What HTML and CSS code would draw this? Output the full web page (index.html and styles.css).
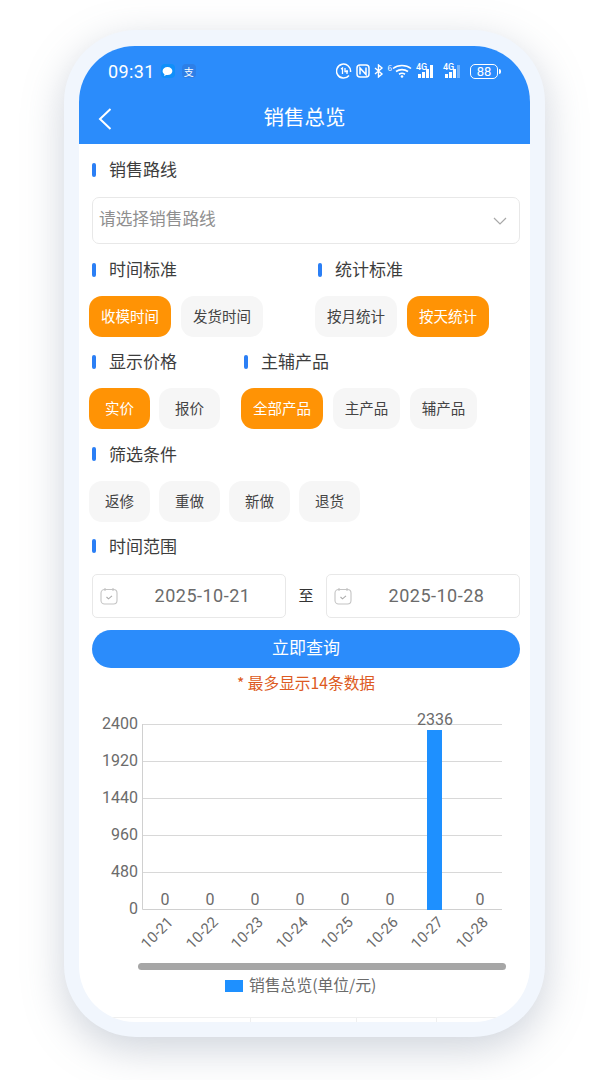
FILE: index.html
```html
<!DOCTYPE html>
<html lang="zh-CN">
<head>
  <meta charset="UTF-8">
  <meta name="viewport" content="width=device-width, initial-scale=1.0">
  <title>销售总览</title>
  <link rel="stylesheet" href="styles.css">
</head>
<body>
  <div class="phone">
    <div class="screen">
      <header class="header">
        <div class="status">
          <div class="status-left">
            <span class="clock">09:31</span>
            <span class="app-icon msg"><svg width="11" height="11" viewBox="0 0 9 9"><path d="M4.5 .8c2.300 0 4 1.400 4 3.300S6.800 7.400 4.500 7.400c-.4 0-.8 0-1.200-.1L1.800 8.300l.2-1.600C1 6.100.5 5.200.5 4.100.5 2.200 2.200.8 4.500.8z" fill="#fff"/></svg></span>
            <span class="app-icon pay">支</span>
          </div>
          <div class="status-right">
            <svg width="16" height="16" viewBox="0 0 16 16" fill="none" stroke="#fff"><path d="M13 12.500A7 7 0 1 1 14.500 9" stroke-width="1.500"/><path d="M5 6l1.500-1v6M9 5v3.500h3M11 7v4" stroke-width="1.300"/></svg>
            <svg width="14" height="14" viewBox="0 0 14 14" fill="none" stroke="#fff" stroke-width="1.500"><rect x="1" y="1" width="12" height="12" rx="3"/><path d="M4 10.500V4l6 6.500V3.500"/></svg>
            <svg width="10" height="14" viewBox="0 0 10 14" fill="none" stroke="#fff" stroke-width="1.400"><path d="M1 4l7 6-3.500 3V1L8 4 1 10"/></svg>
            <span class="wifi">
              <span class="wifi-six">6</span>
              <svg width="20" height="14" viewBox="0 0 20 14" fill="none" stroke="#fff" stroke-width="1.600"><path d="M1 4.500c5-4 13-4 18 0M4 7.500c3.500-2.500 8.500-2.500 12 0M7 10.200c2-1.200 4-1.200 6 0"/><circle cx="10" cy="12.500" r="1.300" fill="#fff" stroke="none"/></svg>
            </span>
            <span class="signal">
              <span class="signal-tag">4G</span>
              <span class="bars"><i class="b1"></i><i class="b2"></i><i class="b3"></i><i class="b4"></i></span>
            </span>
            <span class="signal">
              <span class="signal-tag">4G</span>
              <span class="bars"><i class="b1"></i><i class="b2"></i><i class="b3"></i><i class="b4 dim"></i></span>
            </span>
            <span class="battery"><span class="battery-body">88</span><span class="battery-tip"></span></span>
          </div>
        </div>
        <div class="nav">
          <svg class="back" width="14" height="24" viewBox="0 0 14 24" fill="none" stroke="#fff" stroke-width="2"><path d="M12.500 2 2 12l10.500 10"/></svg>
          <h1>销售总览</h1>
        </div>
      </header>

      <main class="content">
        <div class="label label-first">销售路线</div>
        <div class="select">
          <span>请选择销售路线</span>
          <svg width="14" height="8" viewBox="0 0 14 8" fill="none" stroke="#a8a8a8" stroke-width="1.200"><path d="M1 1l6 6 6-6"/></svg>
        </div>

        <div class="two-col col-a">
          <div class="group">
            <div class="label">时间标准</div>
            <div class="btns">
              <span class="btn on">收模时间</span>
              <span class="btn">发货时间</span>
            </div>
          </div>
          <div class="group">
            <div class="label">统计标准</div>
            <div class="btns">
              <span class="btn">按月统计</span>
              <span class="btn on">按天统计</span>
            </div>
          </div>
        </div>

        <div class="two-col col-b">
          <div class="group">
            <div class="label">显示价格</div>
            <div class="btns tight">
              <span class="btn small on">实价</span>
              <span class="btn small">报价</span>
            </div>
          </div>
          <div class="group">
            <div class="label">主辅产品</div>
            <div class="btns">
              <span class="btn on">全部产品</span>
              <span class="btn mid">主产品</span>
              <span class="btn mid">辅产品</span>
            </div>
          </div>
        </div>

        <div class="group filter">
          <div class="label">筛选条件</div>
          <div class="btns tight">
            <span class="btn small">返修</span>
            <span class="btn small">重做</span>
            <span class="btn small">新做</span>
            <span class="btn small">退货</span>
          </div>
        </div>

        <div class="label label-range">时间范围</div>
        <div class="dates">
          <div class="date">
            <svg width="18" height="18" viewBox="0 0 18 18" fill="none" stroke="#c4c4c4" stroke-width="1.100"><rect x="1" y="2.500" width="16" height="14.500" rx="3.500"/><path d="M5 1v3M13 1v3"/><path d="M6.500 10l2 1.800 3.500-3" stroke="#aaa"/></svg>
            <span>2025-10-21</span>
          </div>
          <span class="to">至</span>
          <div class="date">
            <svg width="18" height="18" viewBox="0 0 18 18" fill="none" stroke="#c4c4c4" stroke-width="1.100"><rect x="1" y="2.500" width="16" height="14.500" rx="3.500"/><path d="M5 1v3M13 1v3"/><path d="M6.500 10l2 1.800 3.500-3" stroke="#aaa"/></svg>
            <span>2025-10-28</span>
          </div>
        </div>
        <div class="query">立即查询</div>
        <div class="note">* 最多显示14条数据</div>

        <svg class="chart" width="451" height="300" viewBox="0 0 451 300">
          <g class="grid">
            <path d="M63 24.500H423M63 61.500H423M63 98.500H423M63 135.500H423M63 172.500H423"/>
          </g>
          <path class="axis" d="M63.500 24V209.500H423"/>
          <g class="y-text">
            <text x="59" y="29">2400</text>
            <text x="59" y="66">1920</text>
            <text x="59" y="103">1440</text>
            <text x="59" y="140">960</text>
            <text x="59" y="177">480</text>
            <text x="59" y="214">0</text>
          </g>
          <rect x="348" y="30" width="15" height="180" fill="#1e90ff"/>
          <g class="values">
            <text x="86" y="205">0</text>
            <text x="131" y="205">0</text>
            <text x="176" y="205">0</text>
            <text x="221" y="205">0</text>
            <text x="266" y="205">0</text>
            <text x="311" y="205">0</text>
            <text x="356" y="25">2336</text>
            <text x="401" y="205">0</text>
          </g>
          <g class="x-text">
            <text transform="translate(95 223) rotate(-45)">10-21</text>
            <text transform="translate(140 223) rotate(-45)">10-22</text>
            <text transform="translate(185 223) rotate(-45)">10-23</text>
            <text transform="translate(230 223) rotate(-45)">10-24</text>
            <text transform="translate(275 223) rotate(-45)">10-25</text>
            <text transform="translate(320 223) rotate(-45)">10-26</text>
            <text transform="translate(365 223) rotate(-45)">10-27</text>
            <text transform="translate(410 223) rotate(-45)">10-28</text>
          </g>
          <rect x="59" y="263" width="368" height="7" rx="3.500" fill="#a6a6a6"/>
          <rect x="146" y="280" width="18" height="12" fill="#1e90ff"/>
          <text class="legend" x="170" y="291">销售总览(单位/元)</text>
        </svg>
      </main>

      <div class="tabbar">
        <span class="tab t1"></span>
        <span class="tab t2"></span>
        <span class="tab t3"></span>
        <span class="tab t4"></span>
      </div>
    </div>
  </div>
</body>
</html>
```

FILE: styles.css
```css
* {
  box-sizing: border-box;
}

body {
  margin: 0;
  width: 607px;
  height: 1080px;
  overflow: hidden;
  background: #fff;
  font-family: "Noto Sans CJK SC", "Noto Sans", sans-serif;
  color: #333;
}

.phone {
  width: 481px;
  height: 1007px;
  margin: 30px 0 0 64px;
  padding: 16px 15px 15px;
  background: #f1f6fd;
  border-radius: 72px;
  box-shadow: 0 12px 40px rgba(110, 125, 150, 0.34);
}

.screen {
  display: flex;
  flex-direction: column;
  height: 100%;
  background: #fff;
  border-radius: 56px;
  overflow: hidden;
}

/* header */
.header {
  flex: none;
  height: 98px;
  background: #2b8cfb;
  color: #fff;
}

.status {
  display: flex;
  justify-content: space-between;
  align-items: center;
  height: 50px;
  padding: 0 29px 0 29px;
}

.status-left,
.status-right {
  display: flex;
  align-items: center;
}

.status-right {
  gap: 4px;
}

.clock {
  font-family: "Roboto", sans-serif;
  font-size: 18px;
  letter-spacing: 0.4px;
  margin-right: 6px;
}

.app-icon {
  display: flex;
  align-items: center;
  justify-content: center;
  width: 14px;
  height: 14px;
  border-radius: 4px;
}

.msg {
  background: #0f8ffa;
  margin-right: 7px;
}

.pay {
  background: #2e7fe6;
  font-size: 10px;
}

.wifi {
  display: flex;
  align-items: flex-start;
}

.wifi-six {
  font-size: 8px;
  line-height: 8px;
}

.signal {
  position: relative;
  display: flex;
  align-items: flex-end;
  width: 23px;
  height: 14px;
}

.signal-tag {
  position: absolute;
  left: 0;
  top: -1px;
  font-family: "Roboto", sans-serif;
  font-size: 9px;
  font-weight: 500;
  line-height: 9px;
}

.bars {
  display: flex;
  align-items: flex-end;
  gap: 1.500px;
  margin-left: 2px;
}

.bars i {
  display: block;
  width: 2.500px;
  background: #fff;
}

.b1 { height: 4px; }
.b2 { height: 6px; }
.b3 { height: 9px; }
.b4 { height: 13px; }

.bars .dim {
  background: rgba(255, 255, 255, 0.35);
}

.battery {
  display: flex;
  align-items: center;
  gap: 1px;
}

.battery-body {
  width: 28px;
  height: 15px;
  border: 1px solid #fff;
  border-radius: 5px;
  font-family: "Roboto", sans-serif;
  font-size: 13px;
  line-height: 13px;
  text-align: center;
}

.battery-tip {
  width: 2px;
  height: 5px;
  background: #fff;
  border-radius: 0 2px 2px 0;
}

.nav {
  position: relative;
  height: 48px;
  display: flex;
  align-items: center;
  justify-content: center;
}

.back {
  position: absolute;
  left: 19px;
  top: 11px;
}

.nav h1 {
  margin: 0;
  font-size: 20.500px;
  font-weight: 400;
  line-height: 41px;
  height: 48px;
}

/* form */
.content {
  flex: 1;
  min-height: 0;
  padding: 0 10px 0 10px;
}

.label {
  position: relative;
  height: 24px;
  margin: 0 0 14px 3px;
  padding-left: 17px;
  font-size: 17px;
  line-height: 21px;
  color: #3d3d3d;
}

.label::before {
  content: "";
  position: absolute;
  left: 0;
  top: 5px;
  width: 4px;
  height: 14px;
  border-radius: 2px;
  background: #2b7ff5;
}

.label-first {
  margin-top: 14px;
  margin-bottom: 15px;
}

.select {
  display: flex;
  align-items: center;
  justify-content: space-between;
  height: 47px;
  margin: 0 0 14px 3px;
  padding: 0 12px 0 6px;
  border: 1px solid #e8e8e8;
  border-radius: 7px;
  font-size: 16.700px;
  color: #8f8f8f;
}

.select span {
  padding-bottom: 5px;
}

.two-col {
  display: flex;
}

.col-a .group:first-child {
  width: 226px;
}

.col-b .group:first-child {
  width: 152px;
}

.btns {
  display: flex;
  gap: 10px;
  height: 41px;
  margin-bottom: 13px;
}

.btns.tight {
  gap: 9px;
}

.btn {
  display: flex;
  align-items: center;
  justify-content: center;
  width: 82px;
  height: 41px;
  padding-bottom: 3px;
  border-radius: 13px;
  background: #f6f6f6;
  font-size: 14.500px;
  color: #444;
}

.btn.on {
  background: #ff9305;
  color: #fff;
}

.btn.small {
  width: 61px;
}

.btn.mid {
  width: 67px;
}

.filter .label {
  margin-bottom: 15px;
  line-height: 23px;
}

.filter .btns {
  margin-bottom: 12px;
}

.label-range {
  margin-bottom: 16px;
  line-height: 23px;
}

.dates {
  display: flex;
  align-items: center;
  margin: 0 0 12px 3px;
  width: 428px;
}

.date {
  display: flex;
  align-items: center;
  width: 194px;
  height: 44px;
  padding-left: 7px;
  border: 1px solid #e8e8e8;
  border-radius: 5px;
  color: #6b6b6b;
}

.date span {
  flex: 1;
  padding-bottom: 1px;
  padding-left: 2px;
  text-align: center;
  font-family: "Roboto", sans-serif;
  font-size: 18px;
  letter-spacing: 0.500px;
}

.to {
  width: 40px;
  padding-bottom: 3px;
  text-align: center;
  font-size: 15px;
  color: #333;
}

.query {
  width: 428px;
  height: 38px;
  margin-left: 3px;
  border-radius: 19px;
  background: #2b8cfb;
  color: #fff;
  font-size: 17px;
  line-height: 34px;
  text-align: center;
}

.note {
  width: 428px;
  margin: 4px 0 0 3px;
  font-size: 15.700px;
  line-height: 22px;
  text-align: center;
  color: #dd5a22;
}

/* chart */
.chart {
  display: block;
  margin: 6px 0 0 -10px;
}

.grid path {
  stroke: #d8d8d8;
  stroke-width: 1;
  fill: none;
}

.axis {
  stroke: #d0d0d0;
  stroke-width: 1;
  fill: none;
}

.chart text {
  font-family: "Roboto", sans-serif;
  font-size: 16px;
  fill: #6b6b6b;
}

.y-text text {
  text-anchor: end;
}

.values text {
  text-anchor: middle;
}

.chart .x-text text {
  font-size: 15px;
  text-anchor: end;
}

.chart .legend {
  font-family: "Noto Sans CJK SC", sans-serif;
  font-size: 15.800px;
}

/* cut-off bar at the bottom */
.tabbar {
  flex: none;
  display: flex;
  height: 5px;
  padding: 0 32px;
}

.tab {
  height: 5px;
  border-top: 1px solid #efefef;
  border-right: 1px solid #efefef;
}

.t1 { width: 140px; }
.t2 { width: 106px; }
.t3 { width: 80px; }
.t4 { width: 60px; border-right: 0; }
```
